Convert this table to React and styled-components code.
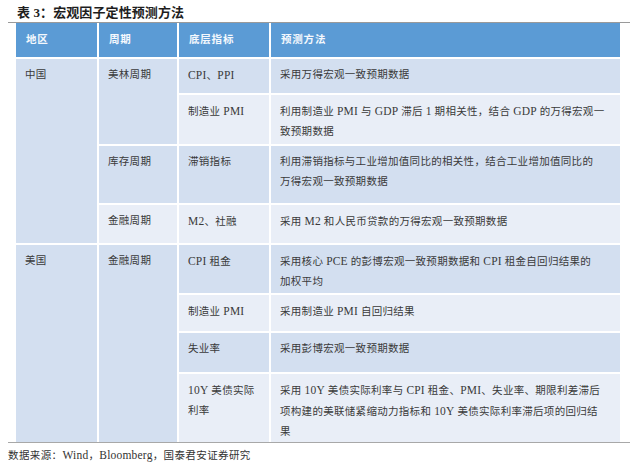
import React from "react";
import styled, { createGlobalStyle } from "styled-components";

const GlobalStyle = createGlobalStyle`
  html, body { margin: 0; padding: 0; background: #ffffff; }
  body {
    font-family: "Liberation Serif", "Noto Sans CJK SC", serif;
    color: #3a3a3a;
  }
`;

const Page = styled.div`
  width: 640px;
  height: 467px;
  overflow: hidden;
  background: #ffffff;
`;

const Title = styled.div`
  height: 22px;
  padding-left: 17px;
  display: flex;
  align-items: center;
  font-family: "Liberation Serif", "Noto Sans CJK SC", serif;
  font-weight: 700;
  font-size: 13px;
  color: #1e1e1e;
  letter-spacing: 0.1px;
`;

const Frame = styled.div`
  margin: 0 10px 0 8px;
  padding: 0 10px 0 8px;
  border-top: 1.5px solid #9a9a9a;
  border-bottom: 1.5px solid #a8a8a8;
`;

const Grid = styled.div`
  display: grid;
  grid-template-columns: 81px 78px 90px 349px;
  grid-template-rows: 34px 34px 49px 57px 38px 48px 36px 39px 68px;
  gap: 2px;
  background: #ffffff;
`;

const tones = {
  head: "#5b9bd5",
  dark: "#d3dff0",
  light: "#e9eef7",
};

const Cell = styled.div`
  grid-column: ${(p) => p.$col};
  grid-row: ${(p) => p.$row} / span ${(p) => p.$span || 1};
  background: ${(p) => tones[p.$tone]};
  padding: ${(p) => (p.$tone === "head" ? "0 8px 0 10px" : "6px 8px 0 9px")};
  display: flex;
  align-items: ${(p) => (p.$tone === "head" ? "center" : "flex-start")};
  font-size: 10.5px;
  font-weight: ${(p) => (p.$tone === "head" ? 700 : 400)};
  color: ${(p) => (p.$tone === "head" ? "#f4f8fd" : "#3a3a3a")};
  letter-spacing: ${(p) => (p.$tone === "head" ? "0.8px" : "0.3px")};
  line-height: 20px;
  white-space: nowrap;
`;

const Latin = styled.span`
  font-size: 11.5px;
  letter-spacing: 0.2px;
`;

const Source = styled.div`
  padding-left: 8px;
  margin-top: 4px;
  font-size: 10.5px;
  line-height: 16px;
  color: #333333;
  letter-spacing: 0.4px;
`;

const rows = [
  { col: 1, row: 2, span: 4, tone: "dark", text: ["中国"] },
  { col: 2, row: 2, span: 2, tone: "dark", text: ["美林周期"] },
  { col: 3, row: 2, tone: "dark", text: ["CPI、PPI"] },
  { col: 4, row: 2, tone: "dark", text: ["采用万得宏观一致预期数据"] },
  { col: 3, row: 3, tone: "light", text: ["制造业 PMI"] },
  {
    col: 4,
    row: 3,
    tone: "light",
    text: ["利用制造业 PMI 与 GDP 滞后 1 期相关性，结合 GDP 的万得宏观一", "致预期数据"],
  },
  { col: 2, row: 4, tone: "dark", text: ["库存周期"] },
  { col: 3, row: 4, tone: "dark", text: ["滞销指标"] },
  {
    col: 4,
    row: 4,
    tone: "dark",
    text: ["利用滞销指标与工业增加值同比的相关性，结合工业增加值同比的", "万得宏观一致预期数据"],
  },
  { col: 2, row: 5, tone: "light", text: ["金融周期"] },
  { col: 3, row: 5, tone: "light", text: ["M2、社融"] },
  { col: 4, row: 5, tone: "light", text: ["采用 M2 和人民币贷款的万得宏观一致预期数据"] },
  { col: 1, row: 6, span: 4, tone: "dark", text: ["美国"] },
  { col: 2, row: 6, span: 4, tone: "dark", text: ["金融周期"] },
  { col: 3, row: 6, tone: "dark", text: ["CPI 租金"] },
  {
    col: 4,
    row: 6,
    tone: "dark",
    text: ["采用核心 PCE 的彭博宏观一致预期数据和 CPI 租金自回归结果的", "加权平均"],
  },
  { col: 3, row: 7, tone: "light", text: ["制造业 PMI"] },
  { col: 4, row: 7, tone: "light", text: ["采用制造业 PMI 自回归结果"] },
  { col: 3, row: 8, tone: "dark", text: ["失业率"] },
  { col: 4, row: 8, tone: "dark", text: ["采用彭博宏观一致预期数据"] },
  { col: 3, row: 9, tone: "light", text: ["10Y 美债实际", "利率"] },
  {
    col: 4,
    row: 9,
    tone: "light",
    text: [
      "采用 10Y 美债实际利率与 CPI 租金、PMI、失业率、期限利差滞后",
      "项构建的美联储紧缩动力指标和 10Y 美债实际利率滞后项的回归结",
      "果",
    ],
  },
];

const Mixed = ({ line }) =>
  line.split(/([A-Za-z0-9]+)/).map((part, i) =>
    /^[A-Za-z0-9]+$/.test(part) ? <Latin key={i}>{part}</Latin> : <React.Fragment key={i}>{part}</React.Fragment>
  );

const Lines = ({ text }) => (
  <div>
    {text.map((t, i) => (
      <React.Fragment key={i}>
        {i > 0 && <br />}
        <Mixed line={t} />
      </React.Fragment>
    ))}
  </div>
);

export default function App() {
  return (
    <Page>
      <GlobalStyle />
      <Title>表 3：宏观因子定性预测方法</Title>
      <Frame>
        <Grid>
          <Cell $col={1} $row={1} $tone="head">地区</Cell>
          <Cell $col={2} $row={1} $tone="head">周期</Cell>
          <Cell $col={3} $row={1} $tone="head">底层指标</Cell>
          <Cell $col={4} $row={1} $tone="head">预测方法</Cell>
          {rows.map((r, i) => (
            <Cell key={i} $col={r.col} $row={r.row} $span={r.span} $tone={r.tone}>
              <Lines text={r.text} />
            </Cell>
          ))}
        </Grid>
      </Frame>
      <Source>
        数据来源：<Latin>Wind</Latin>，<Latin>Bloomberg</Latin>，国泰君安证券研究
      </Source>
    </Page>
  );
}
